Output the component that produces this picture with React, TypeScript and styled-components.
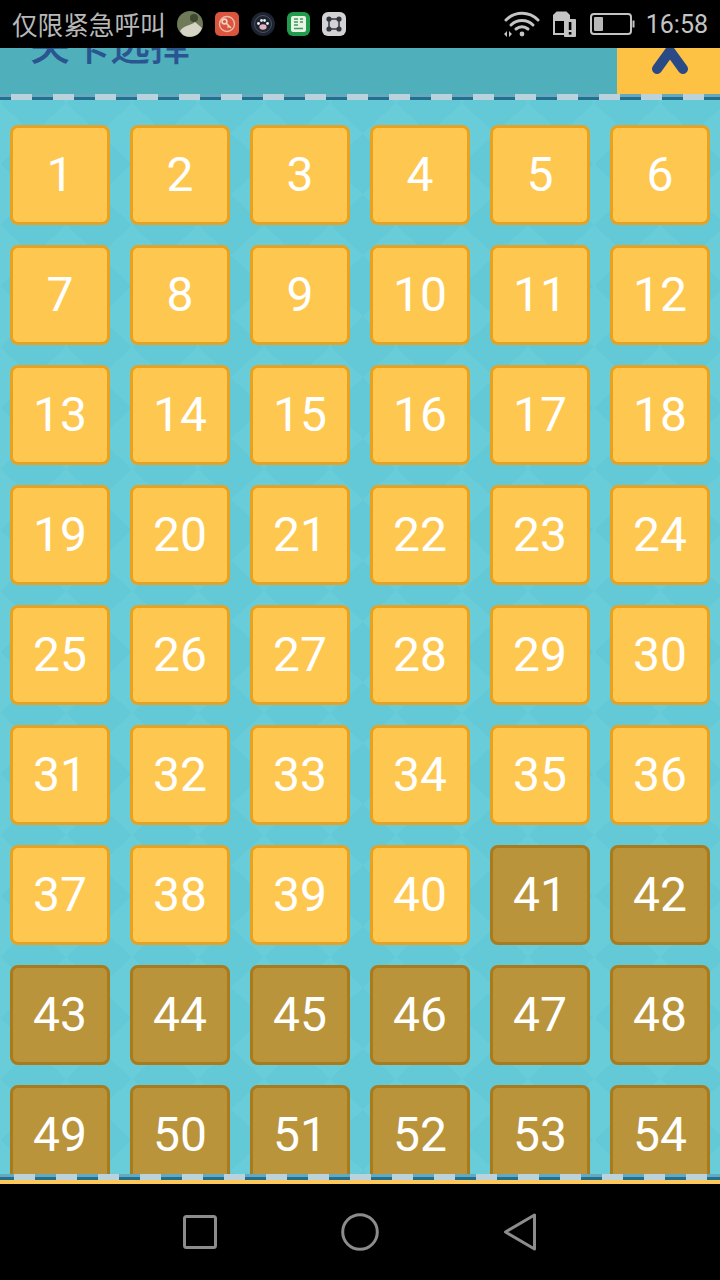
import styled, { createGlobalStyle } from "styled-components";

const GlobalStyle = createGlobalStyle`
  html, body {
    margin: 0;
    padding: 0;
    background: #000;
  }
`;

const Page = styled.div`
  width: 720px;
  height: 1280px;
  display: flex;
  flex-direction: column;
  overflow: hidden;
  background: #000;
`;

const StatusBar = styled.div`
  height: 48px;
  flex: none;
  display: flex;
  align-items: center;
  padding: 0 12px;
  box-sizing: border-box;
  background: #000;
  color: #b8b8b8;
`;

const Carrier = styled.span`
  font-family: "Noto Sans CJK SC", sans-serif;
  font-size: 25.6px;
  line-height: 48px;
  width: 165px;
  white-space: nowrap;
`;

const NotifyIcons = styled.div`
  display: flex;
  align-items: center;
  gap: 12px;
`;

const SystemIcons = styled.div`
  margin-left: auto;
  display: flex;
  align-items: center;
`;

const SimSlot = styled.span`
  display: flex;
  margin-left: 11px;
`;

const BatterySlot = styled.span`
  display: flex;
  margin-left: 14px;
`;

const Clock = styled.span`
  font-family: Roboto, sans-serif;
  font-size: 25px;
  margin-left: 10px;
  color: #c4c4c4;
`;

const Header = styled.div`
  height: 46px;
  flex: none;
  display: flex;
  justify-content: space-between;
  overflow: hidden;
  background: #4fb0bb;
`;

const Title = styled.div`
  align-self: flex-end;
  margin: 0 0 31px 30px;
  font-family: "Noto Sans CJK SC", sans-serif;
  font-size: 40px;
  font-weight: 500;
  line-height: 40px;
  white-space: nowrap;
  color: #2a5590;
`;

const BackButton = styled.div`
  width: 103px;
  display: flex;
  justify-content: center;
  padding-left: 3px;
  box-sizing: border-box;
  background: #fdc243;
`;

const Strip = styled.div<{ $offset: number }>`
  height: 6px;
  flex: none;
  background:
    repeating-linear-gradient(
      90deg,
      transparent 0 21px,
      #b9d2dc 21px 42px
    ) ${({ $offset }) => $offset}px 0,
    linear-gradient(#63a9c0 0 50%, #256f8e 50% 100%);
`;

const Footer = styled.div`
  height: 4px;
  flex: none;
  background: #fdc75a;
`;

const Board = styled.div`
  flex: 1;
  min-height: 0;
  overflow: hidden;
  box-sizing: border-box;
  padding: 25px 10px 0;
  background-color: #69cdd9;
  background-image:
    linear-gradient(to bottom right, #63c9d6 25%, transparent 25%),
    linear-gradient(to bottom left, #63c9d6 25%, transparent 25%),
    linear-gradient(to top right, #63c9d6 25%, transparent 25%),
    linear-gradient(to top left, #63c9d6 25%, transparent 25%);
  background-size: 66px 61px;
  background-position: 33px 3px;
`;

const LevelGrid = styled.div`
  display: grid;
  grid-template-columns: repeat(6, 100px);
  grid-auto-rows: 100px;
  gap: 20px;
`;

const Level = styled.div<{ $locked: boolean }>`
  box-sizing: border-box;
  display: flex;
  align-items: center;
  justify-content: center;
  padding-bottom: 2px;
  border-radius: 8px;
  border: 3px solid ${({ $locked }) => ($locked ? "#a97b1c" : "#e8a222")};
  background: ${({ $locked }) => ($locked ? "#b9943a" : "#fec850")};
  color: #fff;
  font-family: Roboto, sans-serif;
  font-size: 48px;
`;

const NavBar = styled.div`
  height: 96px;
  flex: none;
  display: flex;
  align-items: center;
  justify-content: center;
  gap: 124px;
  background: #000;
`;

const levels = Array.from({ length: 54 }, (_, i) => i + 1);

const Avatar = () => (
  <svg width="26" height="26" viewBox="0 0 26 26">
    <circle cx="13" cy="13" r="13" fill="#6f7a58" />
    <path d="M3 20 C8 13 14 15 18 11 L25 17 A13 13 0 0 1 6 24 Z" fill="#d6d4c4" />
    <circle cx="17" cy="7" r="4" fill="#3d4a30" />
  </svg>
);

const KeyApp = () => (
  <svg width="24" height="24" viewBox="0 0 24 24">
    <rect width="24" height="24" rx="5" fill="#d9553e" />
    <circle cx="12" cy="12" r="7.5" fill="none" stroke="#eebbaa" strokeWidth="1.4" />
    <circle cx="9.5" cy="9.5" r="2.4" fill="none" stroke="#f3d3c6" strokeWidth="1.6" />
    <path d="M11 11 L16 16 M14 14 L12.5 15.5" stroke="#f3d3c6" strokeWidth="1.6" />
  </svg>
);

const PawApp = () => (
  <svg width="24" height="24" viewBox="0 0 24 24">
    <circle cx="12" cy="12" r="12" fill="#1d2430" />
    <circle cx="12" cy="12" r="8.5" fill="none" stroke="#4a5262" strokeWidth="1" />
    <ellipse cx="12" cy="15" rx="3.6" ry="2.8" fill="#e3b3c0" />
    <circle cx="7.5" cy="11.5" r="1.4" fill="#eee" />
    <circle cx="10.5" cy="8.5" r="1.4" fill="#eee" />
    <circle cx="13.5" cy="8.5" r="1.4" fill="#eee" />
    <circle cx="16.5" cy="11.5" r="1.4" fill="#eee" />
  </svg>
);

const GreenApp = () => (
  <svg width="23" height="24" viewBox="0 0 23 24">
    <rect width="23" height="24" rx="6" fill="#1f9d4d" />
    <rect x="4" y="4" width="15" height="16" rx="2" fill="#e8f3e4" />
    <path d="M7 7 H11 M7 10 H11 M7 13 H11 M13 7 H16 M13 10 H16 M7 16.5 H16" stroke="#3f9a5c" strokeWidth="1.6" />
  </svg>
);

const NodesApp = () => (
  <svg width="24" height="24" viewBox="0 0 24 24">
    <rect width="24" height="24" rx="6" fill="#d2d2d4" />
    <rect x="7" y="7" width="10" height="10" fill="none" stroke="#33373d" strokeWidth="1.5" />
    <circle cx="7" cy="7" r="2.6" fill="#33373d" />
    <circle cx="17" cy="7" r="2.6" fill="#33373d" />
    <circle cx="7" cy="17" r="2.6" fill="#33373d" />
    <circle cx="17" cy="17" r="2.6" fill="#33373d" />
  </svg>
);

const WifiIcon = () => (
  <svg width="38" height="26" viewBox="0 0 38 26" fill="none" stroke="#c4c4c4" strokeLinecap="round">
    <path d="M3 9 C12 0 26 0 35 9" strokeWidth="3" />
    <path d="M8 14 C14 8 24 8 30 14" strokeWidth="3" />
    <path d="M13 18 C16.5 15 21.5 15 25 18" strokeWidth="3" />
    <circle cx="19" cy="23" r="2.4" fill="#c4c4c4" stroke="none" />
    <path d="M1 23 L4 20 V26 Z M6 20 L9 23 L6 26 Z" fill="#c4c4c4" stroke="none" />
  </svg>
);

const SimIcon = () => (
  <svg width="24" height="26" viewBox="0 0 24 26">
    <path d="M5 1.5 H14 L17 4.5 V23 H2 V4.5 Z" fill="none" stroke="#c4c4c4" strokeWidth="2" />
    <path d="M5 1 H14 L17 4 V10 H2 V4 Z" fill="#c4c4c4" />
    <rect x="12" y="8" width="12" height="18" rx="1" fill="#c4c4c4" />
    <rect x="16.8" y="11" width="2.6" height="8" fill="#000" />
    <rect x="16.8" y="21" width="2.6" height="2.6" fill="#000" />
  </svg>
);

const BatteryIcon = () => (
  <svg width="46" height="24" viewBox="0 0 46 24">
    <rect x="1" y="2" width="40" height="20" rx="3" fill="none" stroke="#c4c4c4" strokeWidth="2" />
    <rect x="4" y="5" width="9" height="14" rx="1" fill="#b8b8b8" />
    <rect x="42.5" y="8.5" width="2" height="7" fill="#c4c4c4" />
  </svg>
);

const Chevron = () => (
  <svg width="40" height="30" viewBox="0 0 40 30">
    <path d="M7 21 L20 3 L33 21" fill="none" stroke="#2a4a86" strokeWidth="10" strokeLinecap="round" strokeLinejoin="miter" />
  </svg>
);

const RecentIcon = () => (
  <svg width="34" height="34" viewBox="0 0 34 34">
    <rect x="1.5" y="1.5" width="31" height="31" rx="2" fill="none" stroke="#8c8c8c" strokeWidth="3" />
  </svg>
);

const HomeIcon = () => (
  <svg width="38" height="38" viewBox="0 0 38 38">
    <circle cx="19" cy="19" r="17.3" fill="none" stroke="#8c8c8c" strokeWidth="3" />
  </svg>
);

const BackIcon = () => (
  <svg width="34" height="38" viewBox="0 0 34 38">
    <path d="M2.5 19 L31.5 2 V36 Z" fill="none" stroke="#8c8c8c" strokeWidth="3" strokeLinejoin="round" />
  </svg>
);

export default function App() {
  return (
    <Page>
      <GlobalStyle />
      <StatusBar>
        <Carrier>仅限紧急呼叫</Carrier>
        <NotifyIcons>
          <Avatar />
          <KeyApp />
          <PawApp />
          <GreenApp />
          <NodesApp />
        </NotifyIcons>
        <SystemIcons>
          <WifiIcon />
          <SimSlot>
            <SimIcon />
          </SimSlot>
          <BatterySlot>
            <BatteryIcon />
          </BatterySlot>
          <Clock>16:58</Clock>
        </SystemIcons>
      </StatusBar>
      <Header>
        <Title>关卡选择</Title>
        <BackButton>
          <Chevron />
        </BackButton>
      </Header>
      <Strip $offset={-10} />
      <Board>
        <LevelGrid>
          {levels.map((n) => (
            <Level key={n} $locked={n > 40}>
              {n}
            </Level>
          ))}
        </LevelGrid>
      </Board>
      <Strip $offset={-7} />
      <Footer />
      <NavBar>
        <RecentIcon />
        <HomeIcon />
        <BackIcon />
      </NavBar>
    </Page>
  );
}
